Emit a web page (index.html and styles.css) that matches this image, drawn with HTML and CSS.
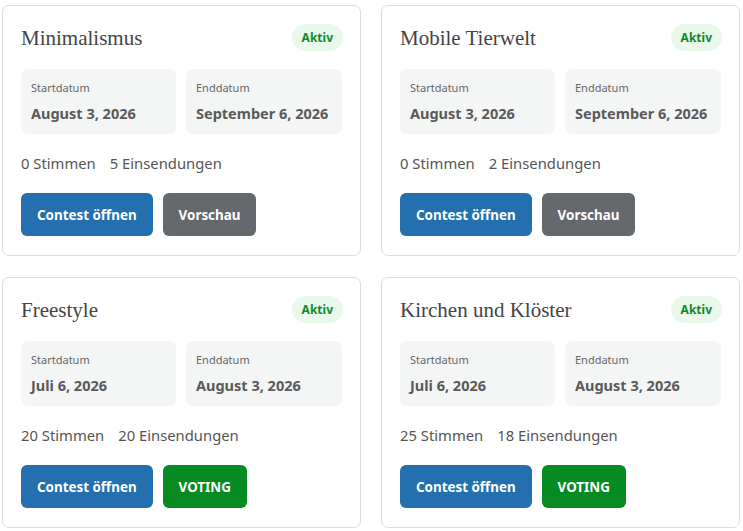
FILE: index.html
```html
<!DOCTYPE html>
<html lang="de">
<head>
<meta charset="utf-8">
<title>Contests</title>
<link rel="stylesheet" href="styles.css">
</head>
<body>
<div class="grid">
  <div class="card">
    <div class="head"><h2 class="title">Minimalismus</h2><span class="badge">Aktiv</span></div>
    <div class="dates">
      <div class="date"><div class="label">Startdatum</div><div class="value">August 3, 2026</div></div>
      <div class="date"><div class="label">Enddatum</div><div class="value">September 6, 2026</div></div>
    </div>
    <div class="stats"><span>0 Stimmen</span><span>5 Einsendungen</span></div>
    <div class="actions"><a class="btn btn-blue">Contest öffnen</a><a class="btn btn-gray">Vorschau</a></div>
  </div>
  <div class="card">
    <div class="head"><h2 class="title">Mobile Tierwelt</h2><span class="badge">Aktiv</span></div>
    <div class="dates">
      <div class="date"><div class="label">Startdatum</div><div class="value">August 3, 2026</div></div>
      <div class="date"><div class="label">Enddatum</div><div class="value">September 6, 2026</div></div>
    </div>
    <div class="stats"><span>0 Stimmen</span><span>2 Einsendungen</span></div>
    <div class="actions"><a class="btn btn-blue">Contest öffnen</a><a class="btn btn-gray">Vorschau</a></div>
  </div>
  <div class="card">
    <div class="head"><h2 class="title">Freestyle</h2><span class="badge">Aktiv</span></div>
    <div class="dates">
      <div class="date"><div class="label">Startdatum</div><div class="value">Juli 6, 2026</div></div>
      <div class="date"><div class="label">Enddatum</div><div class="value">August 3, 2026</div></div>
    </div>
    <div class="stats"><span>20 Stimmen</span><span>20 Einsendungen</span></div>
    <div class="actions"><a class="btn btn-blue">Contest öffnen</a><a class="btn btn-green">VOTING</a></div>
  </div>
  <div class="card">
    <div class="head"><h2 class="title">Kirchen und Klöster</h2><span class="badge">Aktiv</span></div>
    <div class="dates">
      <div class="date"><div class="label">Startdatum</div><div class="value">Juli 6, 2026</div></div>
      <div class="date"><div class="label">Enddatum</div><div class="value">August 3, 2026</div></div>
    </div>
    <div class="stats"><span>25 Stimmen</span><span>18 Einsendungen</span></div>
    <div class="actions"><a class="btn btn-blue">Contest öffnen</a><a class="btn btn-green">VOTING</a></div>
  </div>
</div>
</body>
</html>
```
FILE: styles.css
```css
* { box-sizing: border-box; }
body {
  margin: 0;
  background: #fff;
  font-family: "Noto Sans", "DejaVu Sans", sans-serif;
  color: #555;
}
.grid {
  display: grid;
  grid-template-columns: 359px 359px;
  column-gap: 20px;
  row-gap: 21px;
  padding: 5px 0 0 2px;
}
.card {
  border: 1px solid #dcdcdc;
  border-radius: 7px;
  padding: 17px 17px 19px 18px;
  display: flex;
  flex-direction: column;
}
.head {
  display: flex;
  justify-content: space-between;
  align-items: flex-start;
  height: 46px;
}
.title {
  margin: 1px 0 0;
  font-family: "Liberation Serif", serif;
  font-weight: normal;
  font-size: 21px;
  line-height: 28px;
  color: #444;
}
.badge {
  background: #e8f8ea;
  color: #118a2b;
  font-weight: bold;
  font-size: 12px;
  line-height: 27px;
  height: 27px;
  padding: 0 10px;
  margin-top: 1px;
  border-radius: 14px;
}
.dates {
  display: grid;
  grid-template-columns: 155px 156px;
  gap: 10px;
}
.date {
  background: #f4f5f5;
  border-radius: 7px;
  height: 65px;
  padding: 11px 10px 0;
}
.label {
  font-size: 11px;
  line-height: 15px;
  color: #666;
}
.value {
  margin-top: 8px;
  font-size: 14.5px;
  line-height: 20px;
  font-weight: bold;
  color: #5a5a5a;
}
.stats {
  display: flex;
  gap: 14px;
  font-size: 14.8px;
  line-height: 20px;
  margin-top: 19px;
  color: #555;
}
.actions {
  display: flex;
  gap: 10px;
  margin-top: 20px;
}
.btn {
  display: inline-flex;
  align-items: center;
  justify-content: center;
  height: 43px;
  padding: 0 16px;
  border-radius: 6px;
  color: #fff;
  font-weight: bold;
  font-size: 13.4px;
}
.btn-blue { background: #2470af; }
.btn-gray { background: #65686d; }
.btn-green { background: #068a22; }
```
